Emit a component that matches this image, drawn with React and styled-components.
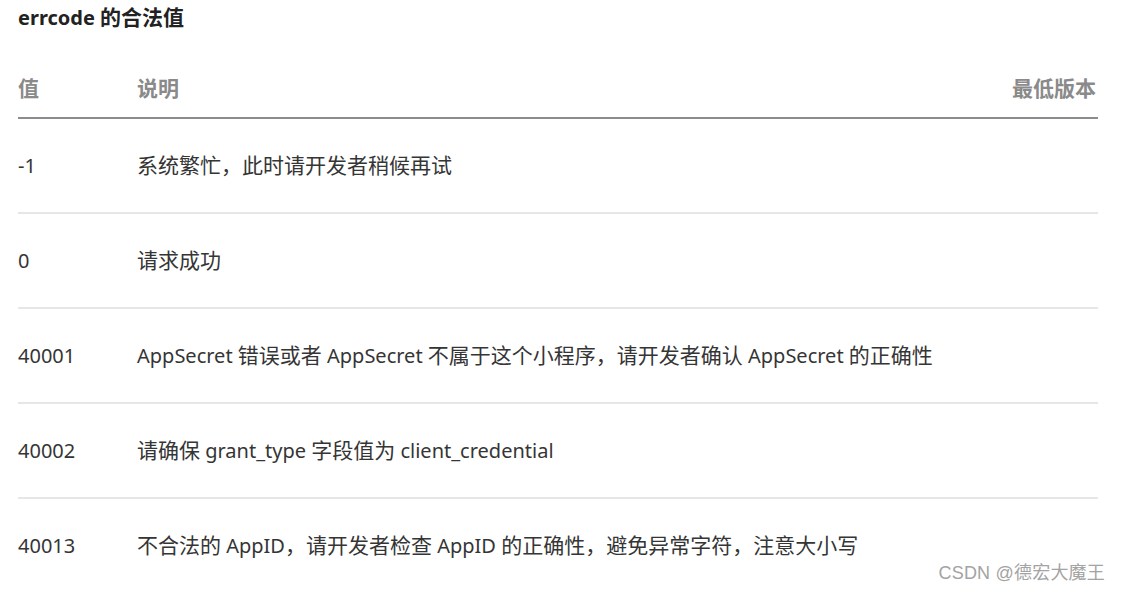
import React from "react"
import styled, { createGlobalStyle } from "styled-components"

const GlobalStyle = createGlobalStyle`
  html, body {
    margin: 0;
    padding: 0;
    background: #fff;
  }
  body {
    font-family: "Noto Sans", "Noto Sans CJK SC", sans-serif;
    color: #333;
  }
`

const Page = styled.div`
  position: relative;
  width: 1121px;
  height: 592px;
  overflow: hidden;
  padding: 0 23px 0 18px;
  box-sizing: border-box;
`

const Title = styled.h4`
  margin: 0;
  padding-top: 3px;
  font-size: 20px;
  line-height: 28px;
  font-weight: 700;
  color: #222;
`

// CJK runs are drawn a touch wider than the latin text, as in the source page
const Han = styled.span`
  font-size: 21px;
`

const Table = styled.table`
  width: 100%;
  margin-top: 27px;
  border-collapse: collapse;
  font-size: 20px;
  line-height: 32px;
  th,
  td {
    padding: 0;
    text-align: left;
    vertical-align: middle;
  }
`

const HeadRow = styled.tr`
  border-bottom: 2px solid #8c8c8c;
  th {
    height: 58px;
    color: #8a8a8a;
    font-weight: 700;
  }
`

const Row = styled.tr`
  border-bottom: 2px solid ${(p) => (p.$last ? "transparent" : "#e6e6e6")};
  td {
    height: 93px;
    color: #353535;
  }
`

const CodeCell = styled.td`
  width: 119px;
`

const Right = styled.th`
  && {
    text-align: right;
    padding-right: 2px;
  }
`

const Watermark = styled.div`
  position: absolute;
  right: 16px;
  bottom: 8px;
  font-family: "Liberation Sans", "Noto Sans CJK SC", sans-serif;
  font-size: 18px;
  color: #a3a3a3;
  letter-spacing: 0.2px;
`

const rows = [
  ["-1", "系统繁忙，此时请开发者稍候再试"],
  ["0", "请求成功"],
  ["40001", "AppSecret 错误或者 AppSecret 不属于这个小程序，请开发者确认 AppSecret 的正确性"],
  ["40002", "请确保 grant_type 字段值为 client_credential"],
  ["40013", "不合法的 AppID，请开发者检查 AppID 的正确性，避免异常字符，注意大小写"],
]

const cjk = /([\u3000-\u9fff\uff00-\uffef]+)/

function Mixed({ text }) {
  return text
    .split(cjk)
    .filter(Boolean)
    .map((part, i) => (cjk.test(part) ? <Han key={i}>{part}</Han> : <span key={i}>{part}</span>))
}

export default function App() {
  return (
    <Page>
      <GlobalStyle />
      <Title>
        <Mixed text="errcode 的合法值" />
      </Title>
      <Table>
        <thead>
          <HeadRow>
            <th>
              <Mixed text="值" />
            </th>
            <th>
              <Mixed text="说明" />
            </th>
            <Right>
              <Mixed text="最低版本" />
            </Right>
          </HeadRow>
        </thead>
        <tbody>
          {rows.map(([code, desc], i) => (
            <Row key={code} $last={i === rows.length - 1}>
              <CodeCell>{code}</CodeCell>
              <td>
                <Mixed text={desc} />
              </td>
              <td></td>
            </Row>
          ))}
        </tbody>
      </Table>
      <Watermark>CSDN @德宏大魔王</Watermark>
    </Page>
  )
}
